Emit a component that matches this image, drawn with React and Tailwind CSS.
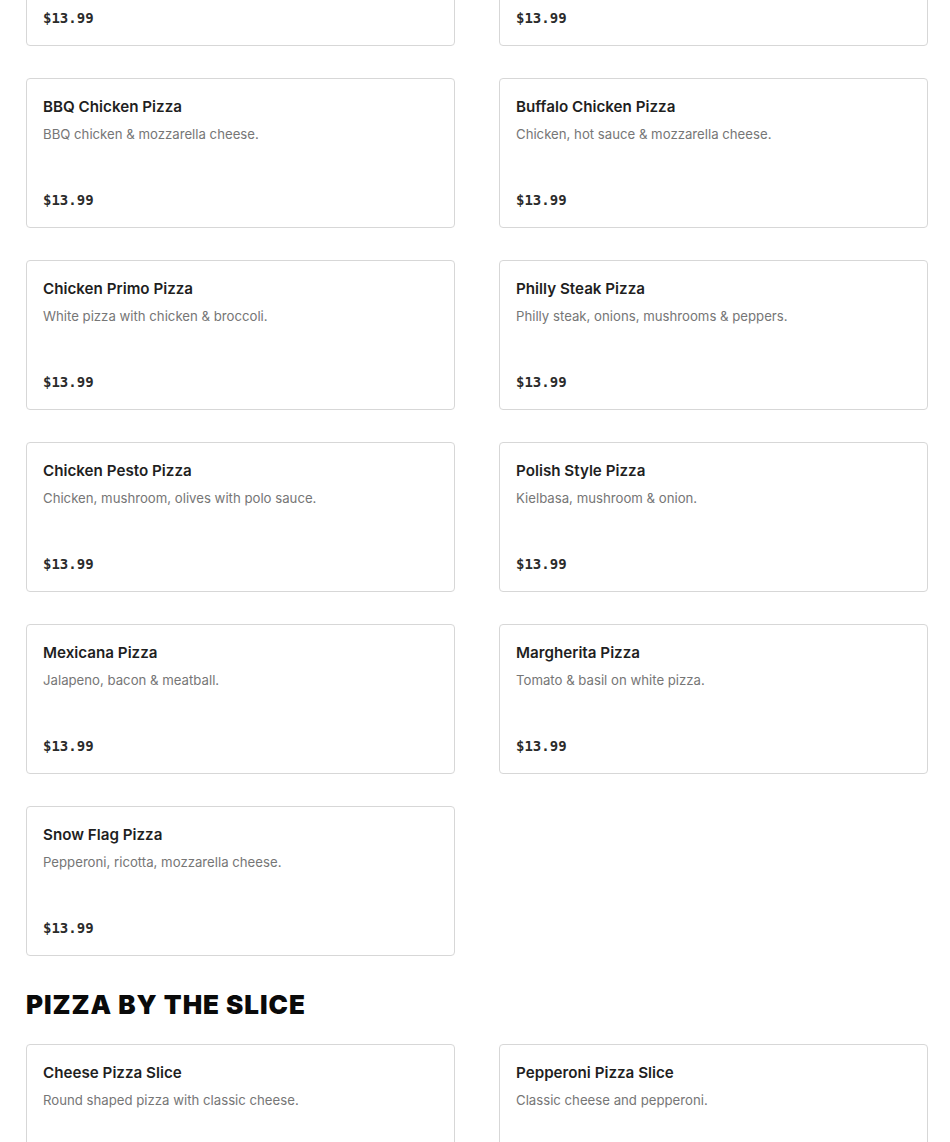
import React from 'react';

const pizzas = [
  { name: 'Cheese Pizza', desc: 'Classic cheese pizza.', price: '$13.99' },
  { name: 'Pepperoni Pizza', desc: 'Pepperoni & mozzarella cheese.', price: '$13.99' },
  { name: 'BBQ Chicken Pizza', desc: 'BBQ chicken & mozzarella cheese.', price: '$13.99' },
  { name: 'Buffalo Chicken Pizza', desc: 'Chicken, hot sauce & mozzarella cheese.', price: '$13.99' },
  { name: 'Chicken Primo Pizza', desc: 'White pizza with chicken & broccoli.', price: '$13.99' },
  { name: 'Philly Steak Pizza', desc: 'Philly steak, onions, mushrooms & peppers.', price: '$13.99' },
  { name: 'Chicken Pesto Pizza', desc: 'Chicken, mushroom, olives with polo sauce.', price: '$13.99' },
  { name: 'Polish Style Pizza', desc: 'Kielbasa, mushroom & onion.', price: '$13.99' },
  { name: 'Mexicana Pizza', desc: 'Jalapeno, bacon & meatball.', price: '$13.99' },
  { name: 'Margherita Pizza', desc: 'Tomato & basil on white pizza.', price: '$13.99' },
  { name: 'Snow Flag Pizza', desc: 'Pepperoni, ricotta, mozzarella cheese.', price: '$13.99' },
];

const slices = [
  { name: 'Cheese Pizza Slice', desc: 'Round shaped pizza with classic cheese.', price: '$3.50' },
  { name: 'Pepperoni Pizza Slice', desc: 'Classic cheese and pepperoni.', price: '$3.99' },
];

const MenuCard = ({ item }) => (
  <div className="flex h-[150px] flex-col rounded-[4px] border border-[#d7d7d7] bg-white px-4 pt-[18px] pb-[17px]">
    <h3 className="text-[15.2px] leading-5 font-semibold text-[#1f1f1f]">{item.name}</h3>
    <p className="mt-[7px] text-[13.2px] leading-5 text-[#767676]">{item.desc}</p>
    <p className="mt-auto font-['DejaVu_Sans_Mono',monospace] text-[14px] leading-5 font-bold text-[#2b2b2b]">
      {item.price}
    </p>
  </div>
);

export default function App() {
  return (
    <div className="h-[1142px] overflow-hidden bg-white font-['Inter','Noto_Sans',sans-serif]">
      <div className="-mt-[104px] pl-[26px] pr-[22px]">
        {/* Full pizzas */}
        <div className="grid grid-cols-2 gap-x-[44px] gap-y-[32px]">
          {pizzas.map((item) => (
            <MenuCard key={item.name} item={item} />
          ))}
        </div>

        {/* Slices */}
        <h2 className="mt-[33px] mb-[23px] text-[26px] leading-8 font-black tracking-[0.95px] text-[#0a0a0a]">
          PIZZA BY THE SLICE
        </h2>
        <div className="grid grid-cols-2 gap-x-[44px] gap-y-[32px]">
          {slices.map((item) => (
            <MenuCard key={item.name} item={item} />
          ))}
        </div>
      </div>
    </div>
  );
}
